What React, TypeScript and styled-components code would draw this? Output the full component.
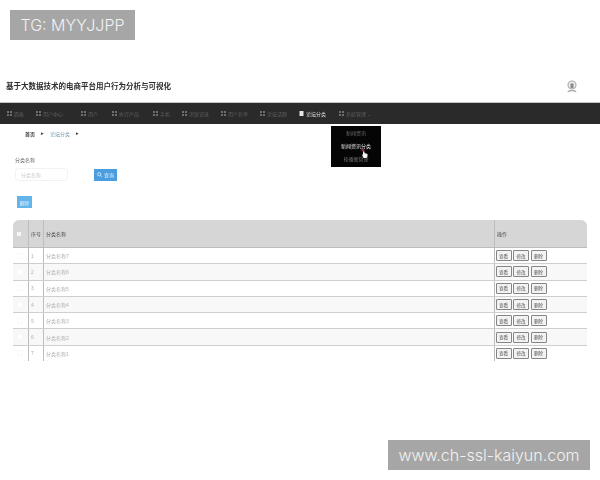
import React from 'react';
import styled, { createGlobalStyle } from 'styled-components';

const Global = createGlobalStyle`
  html, body { margin: 0; padding: 0; background: #fff; }
  body { font-family: "Liberation Sans", "Noto Sans CJK SC", sans-serif; }
`;

const Page = styled.div`
  position: relative;
  width: 600px;
  height: 480px;
  overflow: hidden;
  background: #fff;
`;

const Shot = styled.div`
  display: flex;
  flex-direction: column;
  height: 480px;
  filter: blur(0.6px);
`;

const Header = styled.header`
  display: flex;
  align-items: center;
  justify-content: space-between;
  height: 103px;
  box-sizing: border-box;
  padding: 71px 21px 0 6px;
  border-bottom: 1px solid #c4c4c4;
`;

const Title = styled.h1`
  margin: 0;
  font-size: 7.5px;
  line-height: 12px;
  font-weight: 700;
  color: #2e2e2e;
`;

const Nav = styled.nav`
  display: flex;
  align-items: center;
  height: 21px;
  flex: none;
  padding-left: 7px;
  background: #2b2a2a;
`;

const NavItem = styled.div<{ $w: number; $active?: boolean }>`
  display: flex;
  align-items: center;
  gap: 2px;
  width: ${p => p.$w}px;
  flex: none;
  font-size: 5px;
  color: ${p => (p.$active ? '#dcdcdc' : '#5e5e5e')};
  white-space: nowrap;
`;

const Crumbs = styled.div`
  display: flex;
  align-items: center;
  gap: 6px;
  height: 18px;
  flex: none;
  padding-left: 25px;
  font-size: 5px;
  color: #444;
`;

const Crumb = styled.span<{ $link?: boolean }>`
  color: ${p => (p.$link ? '#7c9bb0' : '#444')};
  font-weight: ${p => (p.$link ? 400 : 700)};
`;

const Form = styled.div`
  display: flex;
  flex-direction: column;
  gap: 4px;
  padding: 15px 0 0 15px;
`;

const Label = styled.label`
  font-size: 5px;
  line-height: 7px;
  color: #666;
`;

const FormRow = styled.div`
  display: flex;
  align-items: center;
  gap: 26px;
`;

const Input = styled.div`
  display: flex;
  align-items: center;
  width: 53px;
  height: 13px;
  box-sizing: border-box;
  padding-left: 5px;
  border: 1px solid #f2f2f2;
  border-radius: 3px;
  font-size: 5px;
  color: #cacaca;
`;

const Search = styled.div`
  display: flex;
  align-items: center;
  justify-content: center;
  gap: 2px;
  width: 23px;
  height: 12px;
  background: #4a9ee0;
  color: #e4f1fb;
  font-size: 5px;
`;

const Delete = styled.div`
  display: flex;
  align-items: center;
  justify-content: center;
  width: 15px;
  height: 12px;
  margin: 15px 0 12px 17px;
  background: #63b4ea;
  color: #e4f1fb;
  font-size: 5px;
`;

const Table = styled.div`
  display: flex;
  flex-direction: column;
  width: 574px;
  margin-left: 13px;
`;

const Columns = styled.div`
  display: grid;
  grid-template-columns: 15px 15px 451px 93px;
`;

const HeadRow = styled(Columns)`
  height: 27px;
  background: #d6d6d6;
  border-radius: 6px 6px 0 0;
  border-bottom: 1px solid #bcbcbc;
`;

const BodyRow = styled(Columns)<{ $odd: boolean }>`
  height: 15.3px;
  background: ${p => (p.$odd ? '#fff' : '#f8f8f8')};
  border-bottom: 1px solid #cfcfcf;
  &:last-child { border-bottom: 0; background: #fff; }
`;

const Cell = styled.div<{ $head?: boolean; $line?: boolean; $ops?: boolean }>`
  display: flex;
  align-items: center;
  gap: 1.5px;
  padding-left: ${p => (p.$ops ? '0.5px' : '2px')};
  font-size: 5px;
  color: ${p => (p.$head ? '#4a4a4a' : '#b0b0b0')};
  border-left: ${p => (p.$line ? '1px solid #bdbdbd' : '0')};
`;

const Check = styled.div<{ $head?: boolean }>`
  width: 4px;
  height: 4px;
  margin-left: 2px;
  background: ${p => (p.$head ? '#f6f6f6' : '#fff')};
  border: ${p => (p.$head ? '0' : '1px solid #f8f8f8')};
`;

const Action = styled.div`
  display: flex;
  align-items: center;
  justify-content: center;
  width: 16px;
  height: 11px;
  box-sizing: border-box;
  border: 1px solid #858585;
  border-radius: 1px;
  background: #f3f3f3;
  color: #555;
  font-size: 4.6px;
`;

const Menu = styled.div`
  position: absolute;
  left: 331px;
  top: 126px;
  width: 50px;
  height: 41px;
  box-sizing: border-box;
  padding-bottom: 2px;
  display: flex;
  flex-direction: column;
  align-items: center;
  justify-content: center;
  gap: 7px;
  background: #050505;
  filter: blur(0.5px);
`;

const MenuItem = styled.div<{ $on?: boolean }>`
  font-size: 5px;
  line-height: 6px;
  color: ${p => (p.$on ? '#e4e4e4' : '#6e6e6e')};
`;

const Cursor = styled.svg`
  position: absolute;
  left: 361px;
  top: 148px;
`;

const Mark = styled.div<{ $x: number; $y: number; $w: number; $size: number }>`
  position: absolute;
  left: ${p => p.$x}px;
  top: ${p => p.$y}px;
  width: ${p => p.$w}px;
  height: 30px;
  display: flex;
  align-items: center;
  justify-content: center;
  background: #a6a6a6;
  color: #f2f2f2;
  font-family: Inter, "Liberation Sans", sans-serif;
  font-weight: 300;
  font-size: ${p => p.$size}px;
  white-space: nowrap;
`;

const GridIcon = ({ on }: { on?: boolean }) => (
  <svg width="5" height="5" viewBox="0 0 5 5" fill={on ? '#e8e8e8' : '#6e6e6e'}>
    <path d={on ? 'M.5 0h4v5h-4z' : 'M0 0h2v2H0zM3 0h2v2H3zM0 3h2v2H0zM3 3h2v2H3z'} />
  </svg>
);

const navItems = [
  { t: '面板', w: 29 },
  { t: '用户中心', w: 45 },
  { t: '用户', w: 31 },
  { t: '执行产品', w: 41 },
  { t: '手机', w: 29 },
  { t: '浏览记录', w: 39 },
  { t: '用户名单', w: 39 },
  { t: '论坛话题', w: 39 },
  { t: '论坛分类', w: 40, active: true },
  { t: '系统管理 ⌄', w: 50 },
];

const rows = [7, 6, 5, 4, 3, 2, 1];

export default function App() {
  return (
    <Page>
      <Global />
      <Shot>
        <Header>
          <Title>基于大数据技术的电商平台用户行为分析与可视化</Title>
          <svg width="14" height="16" viewBox="0 0 14 16" fill="none">
            <circle cx="7" cy="6" r="4" stroke="#a8a8a8" strokeWidth="1.1" fill="#ececec" />
            <path d="M5.5 4.5h3v4.5h-3z" fill="#888" />
            <path d="M3 13c1-2 7-2 8 0" stroke="#a8b0b0" strokeWidth="1.6" />
          </svg>
        </Header>
        <Nav>
          {navItems.map(n => (
            <NavItem key={n.t} $w={n.w} $active={n.active}>
              <GridIcon on={n.active} />
              {n.t}
            </NavItem>
          ))}
        </Nav>
        <Crumbs>
          <Crumb>首页</Crumb>
          <Crumb>▸</Crumb>
          <Crumb $link>论坛分类</Crumb>
          <Crumb>▸</Crumb>
        </Crumbs>
        <Form>
          <Label>分类名称</Label>
          <FormRow>
            <Input>分类名称</Input>
            <Search>
              <svg width="5" height="5" viewBox="0 0 10 10" fill="none" stroke="#e4f1fb" strokeWidth="1.6">
                <circle cx="4.5" cy="4.5" r="3.3" />
                <path d="M7 7l2.5 2.5" />
              </svg>
              查询
            </Search>
          </FormRow>
        </Form>
        <Delete>删除</Delete>
        <Table>
          <HeadRow>
            <Cell $head><Check $head /></Cell>
            <Cell $head $line>序号</Cell>
            <Cell $head $line>分类名称</Cell>
            <Cell $head $line>操作</Cell>
          </HeadRow>
          {rows.map((r, i) => (
            <BodyRow key={r} $odd={i % 2 === 0}>
              <Cell><Check /></Cell>
              <Cell $line>{i + 1}</Cell>
              <Cell $line>分类名称{r}</Cell>
              <Cell $line $ops>
                <Action>查看</Action>
                <Action>修改</Action>
                <Action>删除</Action>
              </Cell>
            </BodyRow>
          ))}
        </Table>
      </Shot>
      <Menu>
        <MenuItem>新闻资讯</MenuItem>
        <MenuItem $on>新闻资讯分类</MenuItem>
        <MenuItem>轮播图管理</MenuItem>
      </Menu>
      <Cursor width="7" height="10" viewBox="0 0 7 10">
        <circle cx="2" cy="2" r="1.6" fill="#8a2a3a" />
        <path d="M2 3.5h1.5v1.6L6.5 6v2.5L5.5 10H2.5L.8 6.5l1.2.2z" fill="#f4f4f4" />
      </Cursor>
      <Mark $x={10} $y={10} $w={125} $size={16}>TG: MYYJJPP</Mark>
      <Mark $x={388} $y={440} $w={202} $size={16}>www.ch-ssl-kaiyun.com</Mark>
    </Page>
  );
}
